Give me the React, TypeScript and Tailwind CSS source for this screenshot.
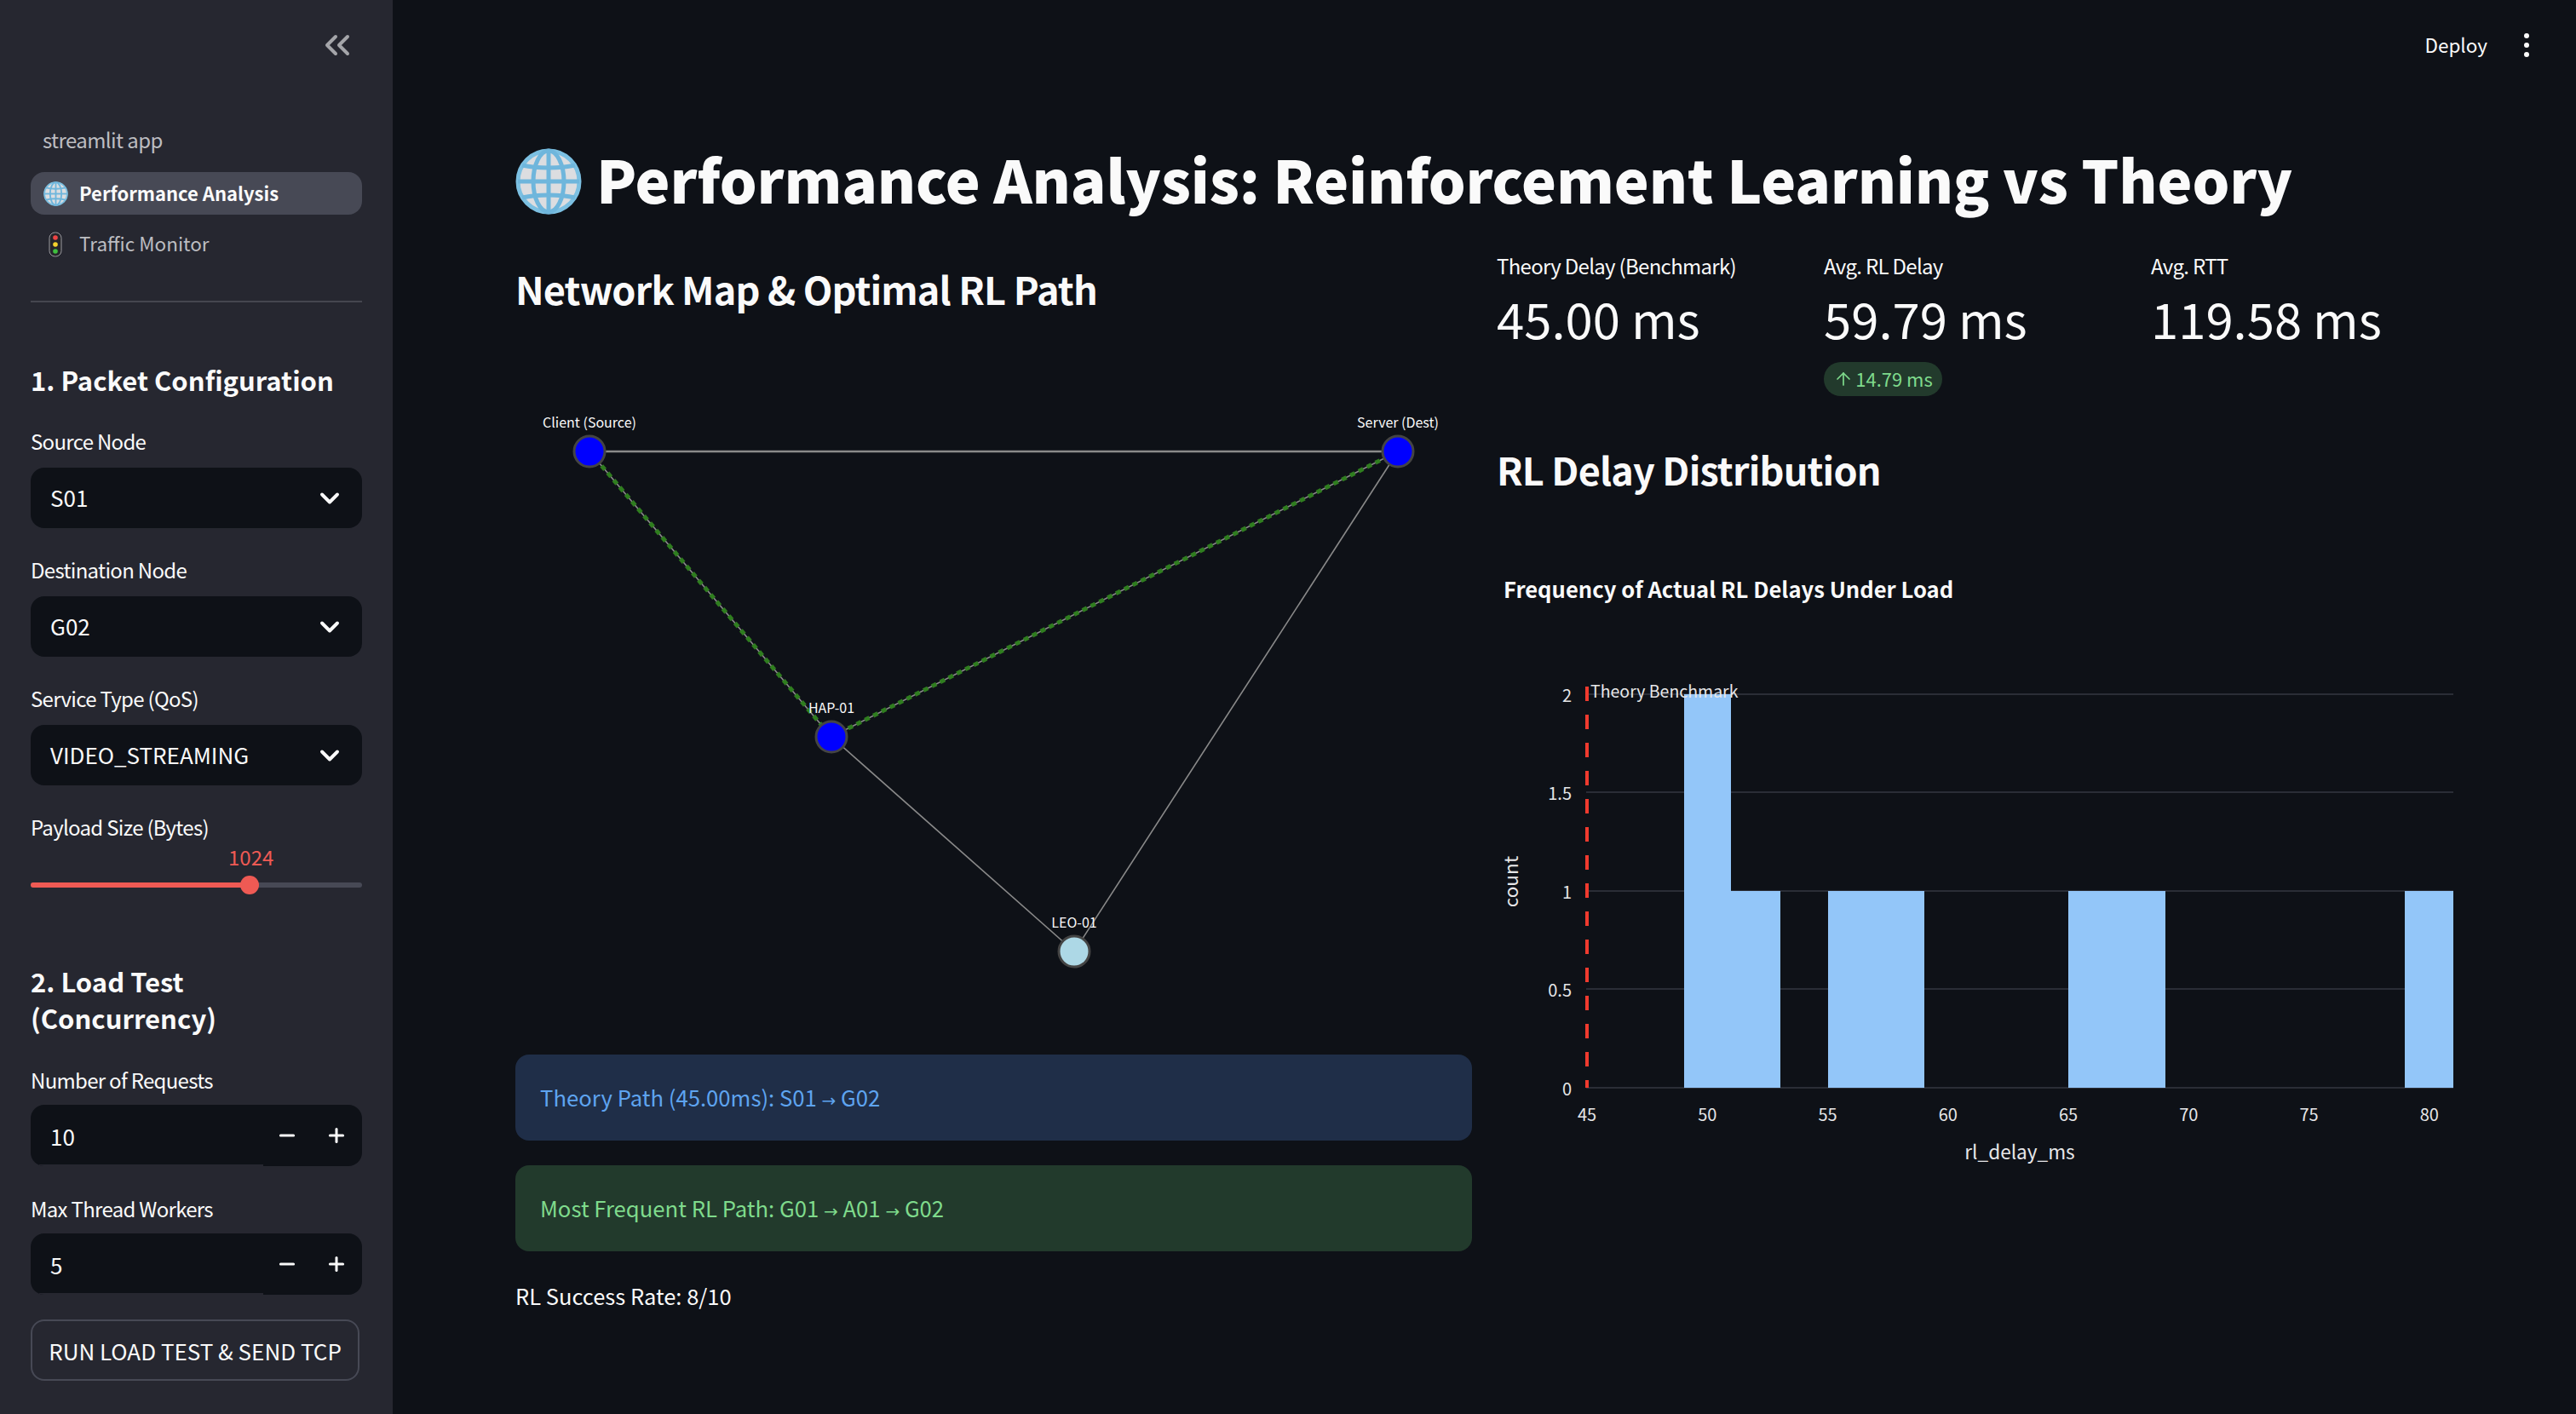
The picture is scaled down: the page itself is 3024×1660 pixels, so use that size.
import React from "react";
import { ArrowUp, ChevronDown, ChevronsLeft, Minus, Plus } from "lucide-react";

function Globe({ className }: { className?: string }) {
  return (
    <svg viewBox="0 0 78 78" className={className}>
      <circle cx="39" cy="39" r="37" fill="#dcdde0" />
      <g fill="none" stroke="#6fb6dc" strokeWidth="5">
        <circle cx="39" cy="39" r="36" stroke="#7cc0e2" />
        <ellipse cx="39" cy="39" rx="18" ry="36" />
        <path d="M39 3v72" />
        <path d="M8 20c18 4 44 4 62 0" />
        <path d="M3 39h72" />
        <path d="M8 58c18-4 44-4 62 0" />
      </g>
    </svg>
  );
}

function TrafficLight() {
  return (
    <svg viewBox="0 0 16 30" className="w-[16px] h-[30px]">
      <rect x="1" y="1" width="14" height="28" rx="6.5" fill="#26262b" stroke="#9a9a9f" strokeWidth="1" />
      <circle cx="8" cy="7" r="2.8" fill="#ee4444" />
      <circle cx="8" cy="15" r="2.8" fill="#f6d32d" />
      <circle cx="8" cy="23" r="2.8" fill="#3fbf3f" />
    </svg>
  );
}

function Arrow() {
  return <span className="font-['DejaVu_Sans',sans-serif] text-[20px]">→</span>;
}

function Label({ children }: { children: React.ReactNode }) {
  return <div className="h-[36px] leading-[36px] text-[24px] tracking-[-0.7px] text-[#fafafa]">{children}</div>;
}

function SelectField({ label, value }: { label: string; value: string }) {
  return (
    <div className="mt-[31px]">
      <Label>{label}</Label>
      <div className="mt-[13px] h-[71px] rounded-2xl bg-[#0e1117] pl-[23px] pr-[20px] flex items-center justify-between text-[26px] text-[#fafafa]">
        <span className="-mt-[2px]">{value}</span>
        <ChevronDown size={36} strokeWidth={2.6} />
      </div>
    </div>
  );
}

function NumberField({ label, value, first }: { label: string; value: string; first?: boolean }) {
  return (
    <div className={first ? "mt-[34px]" : "mt-[32px]"}>
      <Label>{label}</Label>
      <div className="mt-[11px] h-[72px] rounded-2xl bg-[#0e1117] flex items-center text-[26px] text-[#fafafa] relative overflow-hidden">
        <span className="pl-[23px] flex-1">{value}</span>
        <div className="w-[58px] flex justify-center"><Minus size={26} strokeWidth={2.8} /></div>
        <div className="w-[58px] flex justify-center mr-[1px]"><Plus size={26} strokeWidth={2.8} /></div>
        <div className="absolute left-[10px] bottom-0 w-[263px] h-[2px] bg-[#262730]" />
      </div>
    </div>
  );
}

function Sidebar() {
  return (
    <aside className="w-[461px] shrink-0 h-full bg-[#262730] px-[36px]">
      <div className="h-[106px] flex items-center justify-end pr-[5px] text-[#a4a5a9]">
        <ChevronsLeft size={48} strokeWidth={2} />
      </div>
      <div className="mt-[39px] h-[40px] leading-[38px] pl-[14px] text-[24px] tracking-[-0.6px] text-[#bcbdc1]">streamlit app</div>
      <div className="mt-[17px] h-[50px] rounded-2xl bg-[#474955] flex items-center pl-[15px] gap-[13px] text-[22px] font-bold text-[#fafafa]">
        <Globe className="w-[29px] h-[29px]" />
        <span className="-mt-[2px]">Performance Analysis</span>
      </div>
      <div className="mt-[10px] h-[50px] flex items-center pl-[21px] gap-[20px] text-[22.5px] text-[#bcbdc1]">
        <TrafficLight />
        <span className="-mt-[2px]">Traffic Monitor</span>
      </div>
      <div className="mt-[41px] h-[2px] bg-[#45464f]" />

      <h3 className="mt-[70px] h-[44px] leading-[42px] text-[31px] font-bold text-[#fafafa] whitespace-nowrap">1. Packet Configuration</h3>
      <SelectField label="Source Node" value="S01" />
      <SelectField label="Destination Node" value="G02" />
      <SelectField label="Service Type (QoS)" value="VIDEO_STREAMING" />
      <div className="mt-[31px]">
        <Label>Payload Size (Bytes)</Label>
        <div className="relative h-[62px]">
          <div className="absolute left-[232px] top-[5px] text-[24px] leading-[24px] text-[#ef5a54]">1024</div>
          <div className="absolute left-0 right-0 top-[47px] h-[6px] rounded-full bg-[#474955]" />
          <div className="absolute left-0 w-[257px] top-[47px] h-[6px] rounded-full bg-[#ef5a54]" />
          <div className="absolute left-[246px] top-[39px] w-[22px] h-[22px] rounded-full bg-[#ef5a54]" />
        </div>
      </div>

      <h3 className="mt-[79px] leading-[43px] text-[31px] font-bold text-[#fafafa]">
        2. Load Test
        <br />
        (Concurrency)
      </h3>
      <NumberField first label="Number of Requests" value="10" />
      <NumberField label="Max Thread Workers" value="5" />
      <button className="mt-[29px] h-[72px] w-[386px] rounded-2xl border-2 border-[#474955] text-[26px] text-[#fafafa] flex items-center justify-center">
        RUN LOAD TEST &amp; SEND TCP
      </button>
    </aside>
  );
}

function NetworkMap() {
  const nodes = [
    { id: "Client (Source)", x: 692, y: 530, fill: "#0000ff" },
    { id: "Server (Dest)", x: 1641, y: 530, fill: "#0000ff" },
    { id: "HAP-01", x: 976, y: 865, fill: "#0000ff" },
    { id: "LEO-01", x: 1261, y: 1117, fill: "#add8e6" },
  ];
  return (
    <svg viewBox="605 440 1123 760" className="mt-[68px] w-[1123px] h-[760px] block">
      <g stroke="#8a8a8a" fill="none">
        <path d="M692 530H1641" strokeWidth="2.5" />
        <path d="M976 865L1261 1117" strokeWidth="1.6" />
        <path d="M1261 1117L1641 530" strokeWidth="1.6" />
        <path d="M692 530L976 865" strokeWidth="1.6" />
        <path d="M976 865L1641 530" strokeWidth="1.6" />
      </g>
      <g stroke="#2f7d1f" fill="none" strokeWidth="5" strokeDasharray="6 5">
        <path d="M692 530L976 865" />
        <path d="M976 865L1641 530" />
      </g>
      {nodes.map((n) => (
        <g key={n.id}>
          <circle cx={n.x} cy={n.y} r="18" fill={n.fill} stroke="#444444" strokeWidth="3" />
          <text x={n.x} y={n.y - 28} textAnchor="middle" fontSize="16" fill="#fafafa">
            {n.id}
          </text>
        </g>
      ))}
    </svg>
  );
}

function DelayChart() {
  const yTicks = [
    { label: "2", y: 815 },
    { label: "1.5", y: 930 },
    { label: "1", y: 1046 },
    { label: "0.5", y: 1161 },
    { label: "0", y: 1277 },
  ];
  const xTicks = [45, 50, 55, 60, 65, 70, 75, 80];
  const bars = [
    { x: 1977, w: 55, y: 815 },
    { x: 2032, w: 58, y: 1046 },
    { x: 2146, w: 113, y: 1046 },
    { x: 2428, w: 114, y: 1046 },
    { x: 2823, w: 57, y: 1046 },
  ];
  return (
    <svg viewBox="1757 640 1126 760" className="mt-[55px] w-[1126px] h-[760px] block">
      <text x="1765" y="702" fontSize="25.6" fontWeight="700" fill="#fafafa">
        Frequency of Actual RL Delays Under Load
      </text>
      {yTicks.map((t) => (
        <g key={t.label}>
          <path d={`M1862 ${t.y}H2880`} stroke="#2a2d36" strokeWidth="2" />
          <text x="1845" y={t.y + 9} textAnchor="end" fontSize="20" fill="#e6e6e8">
            {t.label}
          </text>
        </g>
      ))}
      {xTicks.map((t) => (
        <text key={t} x={1863 + (t - 45) * 28.25} y="1316" textAnchor="middle" fontSize="20" fill="#e6e6e8">
          {t}
        </text>
      ))}
      {bars.map((b) => (
        <rect key={b.x} x={b.x} y={b.y} width={b.w} height={1277 - b.y} fill="#93c6f9" />
      ))}
      <path d="M1863 806V1277" stroke="#f03a2e" strokeWidth="4" strokeDasharray="17 16" />
      <text x="1867" y="819" fontSize="19.5" fill="#e6e6e8">Theory Benchmark</text>
      <text x="2371" y="1361" textAnchor="middle" fontSize="22.6" fill="#e6e6e8">rl_delay_ms</text>
      <text
        transform="translate(1782 1035) rotate(-90)"
        textAnchor="middle"
        fontSize="22.5"
        fill="#e6e6e8"
      >
        count
      </text>
    </svg>
  );
}

function Metric({ label, value, delta }: { label: string; value: string; delta?: string }) {
  return (
    <div className="w-[384px] shrink-0">
      <Label>{label}</Label>
      <div className="mt-[6px] h-[80px] leading-[74px] text-[58px] text-[#fafafa]">{value}</div>
      {delta && (
        <div className="mt-[9px] w-[139px] h-[40px] rounded-full bg-[#223a2c] text-[#7fdb8c] text-[22px] flex items-center justify-center gap-[2px]">
          <ArrowUp size={24} strokeWidth={1.7} />
          <span className="-mt-[1px]">{delta}</span>
        </div>
      )}
    </div>
  );
}

export default function App() {
  return (
    <div className="h-[1660px] w-[3024px] overflow-hidden flex bg-[#0e1117] text-[#fafafa] font-['Noto_Sans_CJK_SC',sans-serif]">
      <Sidebar />
      <main className="flex-1 min-w-0 pl-[144px] pr-[141px]">
        <header className="h-[106px] -mr-[141px] pr-[55px] flex items-center justify-end gap-[43px] text-[22.5px]">
          <span>Deploy</span>
          <div className="flex flex-col gap-[5px]">
            <span className="w-[6px] h-[6px] rounded-full bg-[#fafafa]" />
            <span className="w-[6px] h-[6px] rounded-full bg-[#fafafa]" />
            <span className="w-[6px] h-[6px] rounded-full bg-[#fafafa]" />
          </div>
        </header>

        <h1 className="mt-[57px] h-[100px] flex items-center gap-[17px] text-[69px] font-black tracking-[-0.18px]">
          <Globe className="w-[78px] h-[78px] shrink-0" />
          <span className="whitespace-nowrap -mt-[6px]">Performance Analysis: Reinforcement Learning vs Theory</span>
        </h1>

        <div className="grid grid-cols-[1123px_1126px] gap-x-[29px]">
          <section>
            <h2 className="mt-[45px] h-[64px] leading-[62px] text-[45px] font-semibold tracking-[-0.85px]">Network Map &amp; Optimal RL Path</h2>
            <NetworkMap />
            <div className="mt-[38px] h-[101px] rounded-2xl bg-[#1f2e48] text-[#5ea4f0] text-[25.7px] flex items-center pl-[29px]">
              <span>Theory Path (45.00ms): S01 <Arrow /> G02</span>
            </div>
            <div className="mt-[29px] h-[101px] rounded-2xl bg-[#223a2c] text-[#7fdb8c] text-[25.7px] flex items-center pl-[29px]">
              <span>Most Frequent RL Path: G01 <Arrow /> A01 <Arrow /> G02</span>
            </div>
            <p className="mt-[32px] h-[40px] leading-[40px] text-[25.5px]">RL Success Rate: 8/10</p>
          </section>

          <section>
            <div className="mt-[31px] flex items-start">
              <Metric label="Theory Delay (Benchmark)" value="45.00 ms" />
              <Metric label="Avg. RL Delay" value="59.79 ms" delta="14.79 ms" />
              <Metric label="Avg. RTT" value="119.58 ms" />
            </div>
            <h2 className="mt-[56px] h-[64px] leading-[60px] text-[45px] font-semibold tracking-[-0.85px]">RL Delay Distribution</h2>
            <DelayChart />
          </section>
        </div>
      </main>
    </div>
  );
}
